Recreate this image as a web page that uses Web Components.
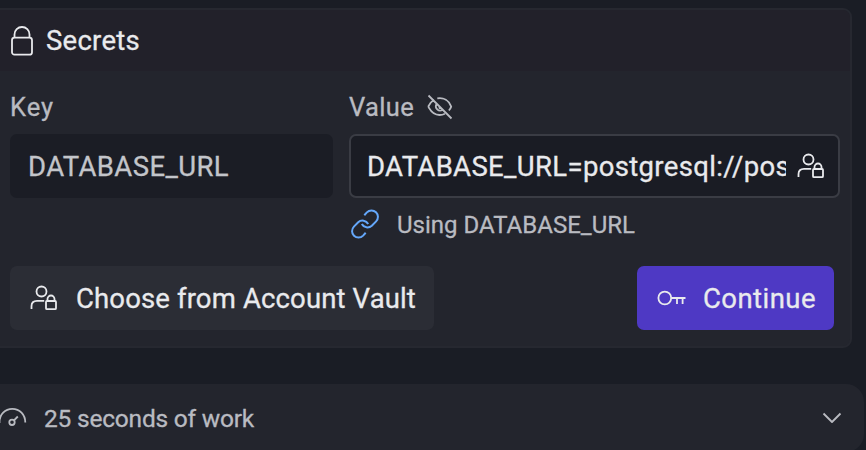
<!DOCTYPE html>
<html lang="en"><head><meta charset="utf-8"><title>Secrets</title>
<style>
html,body{margin:0;height:450px;overflow:hidden;background:#1a1d25}
body{font-family:Roboto,"Noto Sans",sans-serif;color:#e9eaed}
</style></head><body>
<secrets-page></secrets-page>
<script>
const ICONS={
lock:['0 0 22 30','<rect x="1" y="11.7" width="20" height="17" rx="2.5"/><path d="M3.5 11.7V8.5a7.5 7.5 0 0 1 15 0v3.2"/>'],
eye:['0 0 26 26','<path d="M1.5 1.5l23 23M7.2 5.7C4.600 7.200 2.700 9.600 1.500 12.200q0 1 .5 1.700C4.500 18.400 8 21 12.500 21q3 0 5.400-1.300M10.300 4.400c6.400-1 11.700 2 13.900 8.200q-.8 2.200-2.300 3.900M9.300 10.400a4.300 4.300 0 0 0 6 5.600M12.500 12.500v1.600h1.600"/>'],
vault:['0 0 28 26','<circle cx="11.5" cy="6.5" r="5"/><path d="M1.500 24v-2.700q0-5.500 5.500-5.500h7.200"/><rect x="16" y="16" width="10" height="8.200" rx="1"/><path d="M17.500 16v-2a3.500 3.500 0 0 1 7 0v2"/>'],
link:['0 1 30 30','<path d="M14.300 6.200l2.600-2.800a6.400 6.400 0 0 1 9.200 9l-4.300 4.300a6.400 6.400 0 0 1-10-1.700"/><path d="M15.700 23.800l-2.600 2.800a6.400 6.400 0 0 1-9.200-9l4.300-4.300a6.400 6.400 0 0 1 10 1.700"/>'],
key:['0 0 30 16','<circle cx="7.8" cy="8" r="6.400"/><path d="M14.200 8H28.500M20 8v6M25.600 8v6"/>'],
gauge:['0 0 28 20','<path d="M-.500 15v-1C-.500 6.500 5 .800 12.300 .800S25.300 6.500 25.300 14.500"/><circle cx="12" cy="14.300" r="2.700"/><path d="M14 12.400l3.800-3.900"/>'],
chevron:['0 0 20 12','<path d="M1.500 1.500l8.500 8.500 8.500-8.500"/>']
};
class UiIcon extends HTMLElement{
 connectedCallback(){
  const [box,marks]=ICONS[this.getAttribute('name')],[,,w,h]=box.split(' ');
  this.attachShadow({mode:'open'}).innerHTML=`<style>:host{display:block;flex:none;width:${w}px;height:${h}px}svg{display:block;overflow:visible;fill:none;stroke:currentColor;stroke-width:var(--line,1.8);stroke-linejoin:round}</style><svg width="${w}" height="${h}" viewBox="${box}">${marks}</svg>`;
 }
}
customElements.define('ui-icon',UiIcon);
/* A single line of type tracked to an even measure. */
class UiText extends HTMLElement{
 connectedCallback(){
  this.attachShadow({mode:'open'}).innerHTML='<style>:host{display:block;flex:none;white-space:nowrap;line-height:32px}span{display:inline-block;-webkit-text-stroke:.3px currentColor}</style><span><slot></slot></span>';
  const want=+this.getAttribute('measure'),span=this.shadowRoot.querySelector('span');
  span.style.letterSpacing=(want-span.getBoundingClientRect().width)/this.textContent.length+'px';
 }
}
customElements.define('ui-text',UiText);
class UiField extends HTMLElement{
 connectedCallback(){
  this.attachShadow({mode:'open'}).innerHTML=`<style>
:host{display:flex;box-sizing:border-box;height:64px;align-items:center;border-radius:7px;padding:0 14px 0 18px;background:#1b1d25;color:#c3c5ca;font-size:27.500px}
:host([active]){border:2px solid #3a3c44;padding:0 13px 0 16px;color:#e9eaed;background:#1a1c24}
.value{flex:1;min-width:0;overflow:hidden;padding-top:2px}::slotted(ui-icon){margin-left:11px}</style><div class="value"><slot></slot></div><slot name="end"></slot>`;
 }
}
customElements.define('ui-field',UiField);
class UiButton extends HTMLElement{
 connectedCallback(){
  this.attachShadow({mode:'open'}).innerHTML=`<style>
:host{display:flex;box-sizing:border-box;height:64px;align-items:center;gap:18px;padding-left:20px;border-radius:7px;background:#2b2d35;font-size:27.500px;width:424px}
:host([primary]){background:#4e39c4;width:197px;gap:16px}::slotted(ui-text){padding-top:2px}</style><slot></slot>`;
 }
}
customElements.define('ui-button',UiButton);
class SecretsPage extends HTMLElement{
 connectedCallback(){
  this.attachShadow({mode:'open'}).innerHTML=`<style>
:host{display:flex;flex-direction:column;gap:36px;padding-top:8px;height:442px;overflow:hidden}
.card{flex:none;box-sizing:border-box;width:872px;height:340px;margin-left:-20px;background:#23252d;border:2px solid #262830;border-radius:9px;overflow:hidden}
header{display:flex;align-items:center;height:61px;box-sizing:border-box;padding:0 0 0 29px;gap:13px;background:#22212a;font-size:27.500px}
header ui-text{padding-top:1px}
.fields{display:grid;grid-template-columns:323px 491px;column-gap:16px;padding:20px 0 0 28px}
.label{display:flex;align-items:center;height:32px;margin-bottom:11px;gap:13px;color:#b9bbc1;font-size:25.500px}
.hint{display:flex;align-items:center;gap:17px;height:32px;padding-left:1px;margin-top:11px;color:#b9bbc1;font-size:24px}
.hint ui-icon{color:#64a7fa;--line:2}
.actions{display:flex;justify-content:space-between;padding:25px 16px 0 28px}
.work{flex:none;box-sizing:border-box;display:flex;align-items:center;width:884px;height:68px;margin-left:-20px;padding:0 22px 0 20px;border-radius:18px;background:#23252d;color:#b9bbc1;font-size:24.500px}
.work ui-text{margin-left:16px;padding-top:2px;flex:1}
</style>
<section class="card"><header><ui-icon name="lock"></ui-icon><ui-text measure="94">Secrets</ui-text></header>
<div class="fields">
<div><div class="label"><ui-text measure="44">Key</ui-text></div><ui-field><ui-text measure="201">DATABASE_URL</ui-text></ui-field></div>
<div><div class="label"><ui-text measure="65">Value</ui-text><ui-icon name="eye"></ui-icon></div><ui-field active><ui-text measure="423">DATABASE_URL=postgresql://pos</ui-text><ui-icon name="vault" slot="end"></ui-icon></ui-field>
<div class="hint"><ui-icon name="link"></ui-icon><ui-text measure="238">Using DATABASE_URL</ui-text></div></div></div>
<div class="actions"><ui-button><ui-icon name="vault"></ui-icon><ui-text measure="340">Choose from Account Vault</ui-text></ui-button><ui-button primary><ui-icon name="key"></ui-icon><ui-text measure="113">Continue</ui-text></ui-button></div></section>
<section class="work"><ui-icon name="gauge"></ui-icon><ui-text measure="210">25 seconds of work</ui-text><ui-icon name="chevron"></ui-icon></section>`;
 }
}
customElements.define('secrets-page',SecretsPage);
</script></body></html>
